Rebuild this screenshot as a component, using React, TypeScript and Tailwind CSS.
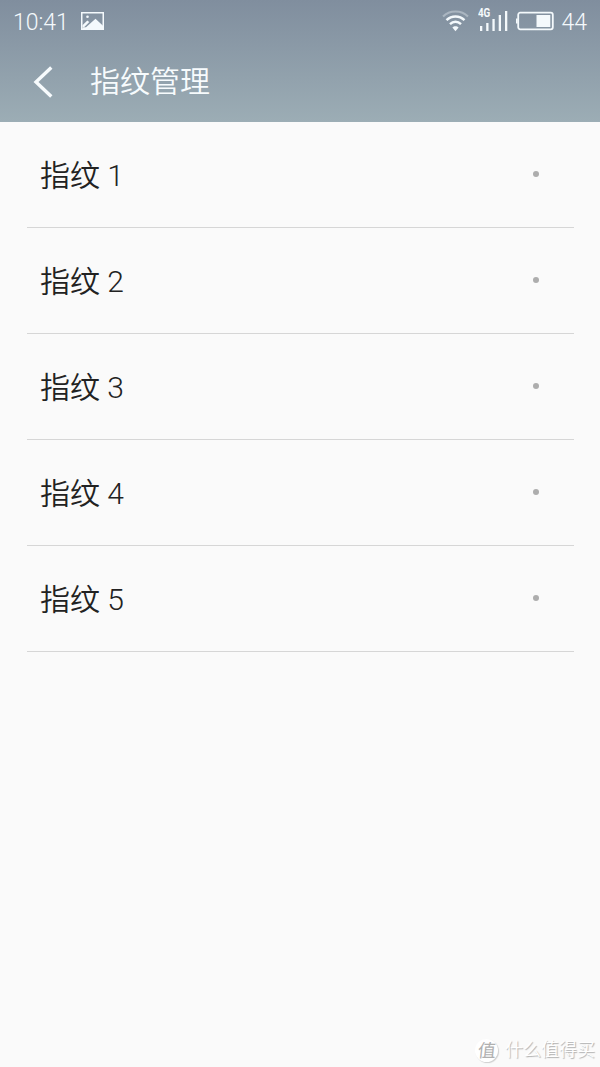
import React from 'react'

const fingerprints = ['指纹 1', '指纹 2', '指纹 3', '指纹 4', '指纹 5']

function StatusBar() {
    return (
        <div className="flex h-[42px] items-center justify-between pl-[13px] pr-[13px] font-light text-[#f4f9fc]">
            <div className="flex items-center gap-[12px]">
                <span className="pt-[3px] text-[23px] leading-[39px]">10:41</span>
                <svg width="23" height="18" viewBox="0 0 23 18">
                    <rect x=".75" y=".75" width="21.5" height="16.5" fill="none" stroke="currentColor" strokeWidth="1.5" />
                    <circle cx="6.5" cy="4.7" r="1.3" fill="currentColor" />
                    <path d="M1.5 13.3 6.3 8.6l2 1.5-5 4.9H1.5z" fill="currentColor" />
                    <path d="M5 15.2 14.5 6.7l7.5 7v3.8H1.5v-2.3z" fill="currentColor" />
                </svg>
            </div>
            <div className="flex items-center">
                <svg width="27" height="22" viewBox="0 0 27 22" fill="none" stroke="currentColor" strokeWidth="2">
                    <path d="M1 6.5C7.5-.2 19.5-.2 26 6.5" opacity=".35" />
                    <path d="M4.5 10.2c5-5 13-5 18 0" strokeWidth="2.4" />
                    <path d="M8 14.2c3.2-3.2 7.8-3.2 11 0" strokeWidth="2.4" />
                    <path d="M10.4 17.4c1.5-1.5 4.7-1.5 6.2 0l-3.1 3.8z" fill="currentColor" stroke="none" />
                </svg>
                <div className="relative ml-[11px] h-[22px] w-[28px]">
                    <span className="absolute -top-[4px] -left-[2px] origin-left scale-x-[0.82] font-['Roboto',sans-serif] text-[12px] leading-[14px] font-bold tracking-[-0.3px]">
                        4G
                    </span>
                    <svg width="28" height="22" viewBox="0 0 28 22" fill="currentColor">
                        <path d="M0 16h2.3v5H0zM6.2 13h2.3v8H6.2zM12.4 9h2.3v12h-2.3zM18.7 5H21v16h-2.3zM25 1h2.3v20H25z" />
                    </svg>
                </div>
                <svg className="ml-[8px]" width="39" height="20" viewBox="0 0 39 20">
                    <rect x="2.2" y="1.7" width="34.6" height="16.6" rx="2" fill="none" stroke="currentColor" strokeWidth="1.8" />
                    <path d="M0 7.5h1.7v5H0zM20.5 4h13.8v12H20.5z" fill="currentColor" />
                </svg>
                <span className="ml-[6px] pt-[2px] text-[23px] leading-[39px]">44</span>
            </div>
        </div>
    )
}

function Watermark() {
    return (
        <div className="absolute right-[5px] bottom-[4px] flex items-center gap-[7px] text-white [text-shadow:1px_1px_1px_#b0b0b0]">
            <span className="flex size-[23px] items-center justify-center rounded-full bg-white text-[18px] font-normal text-[#b0b0b0] shadow-[1px_1px_1px_#cfcfcf] [text-shadow:none]">
                <span className="-skew-x-6">值</span>
            </span>
            <span className="text-[18px] leading-[26px] font-[350]">什么值得买</span>
        </div>
    )
}

function App() {
    return (
        <div className="relative h-[1067px] w-[600px] overflow-hidden bg-[#fafafa] font-['Roboto','Noto_Sans_CJK_SC',sans-serif]">
            <header className="h-[122px] bg-linear-to-b from-[#808e9e] to-[#9cadb5]">
                <StatusBar />
                <div className="flex h-[80px] items-center pl-[33px] text-[#f7fbfd]">
                    <svg width="20" height="32" viewBox="0 0 20 32" fill="none" stroke="currentColor" strokeWidth="3.4">
                        <path d="M18.3 1.5 3 16l15.3 14.5" />
                    </svg>
                    <h1 className="ml-[37px] text-[30px] leading-[80px] font-[350]">指纹管理</h1>
                </div>
            </header>
            <ul className="mx-[26.5px]">
                {fingerprints.map((name) => (
                    <li
                        key={name}
                        className="flex h-[106.1px] items-center justify-between border-b border-[#d6d6d6] pr-[35px] pl-[13.5px]"
                    >
                        <span className="pt-[2px] text-[30px] leading-[104px] font-[350] text-[#222]">{name}</span>
                        <span className="mb-[2px] size-[6px] rounded-full bg-[#adadad]" />
                    </li>
                ))}
            </ul>
            <Watermark />
        </div>
    )
}

export default App
